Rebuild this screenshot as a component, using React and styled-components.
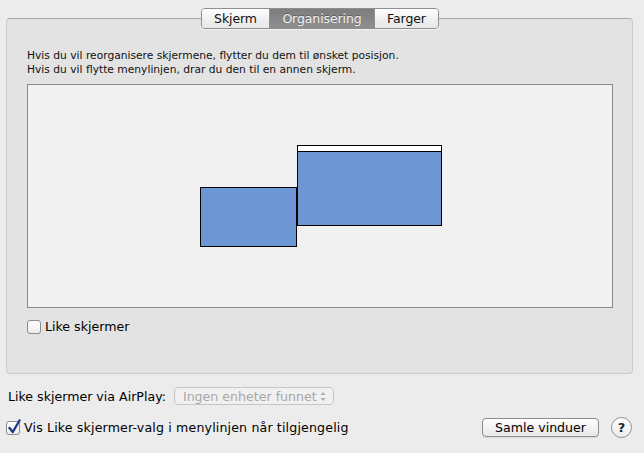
import styled, { createGlobalStyle } from "styled-components";

const Global = createGlobalStyle`
  html, body {
    margin: 0;
    padding: 0;
    background: #ececec;
  }
  body {
    font-family: "DejaVu Sans", "Liberation Sans", sans-serif;
    color: #000;
  }
`;

const Window = styled.div`
  width: 644px;
  height: 453px;
  box-sizing: border-box;
  padding: 8px 11px 0 6px;
  display: flex;
  flex-direction: column;
`;

const Tabs = styled.div`
  display: flex;
  align-self: center;
  margin-left: 1px;
  height: 21px;
  box-sizing: border-box;
  border: 1px solid #8e8e8e;
  border-radius: 4px;
  overflow: hidden;
  position: relative;
  z-index: 2;
  box-shadow: 0 1px 0 rgba(255, 255, 255, 0.5);
`;

const Tab = styled.div`
  width: ${({ w }) => w}px;
  box-sizing: border-box;
  display: flex;
  align-items: center;
  justify-content: center;
  font-size: 12.5px;
  letter-spacing: -0.1px;
  border-left: ${({ first }) => (first ? "none" : "1px solid #8e8e8e")};
  background: ${({ active }) =>
    active
      ? "linear-gradient(#7d7d7d, #8f8f8f)"
      : "linear-gradient(#ffffff, #f0f0f0 50%, #e8e8e8)"};
  color: ${({ active }) => (active ? "#f2f2f2" : "#111")};
  text-shadow: ${({ active }) => (active ? "0 -1px 0 rgba(0,0,0,0.3)" : "none")};
`;

const Group = styled.div`
  margin-top: -11px;
  height: 356px;
  box-sizing: border-box;
  background: #e3e3e3;
  border: 1px solid #cbcbcb;
  border-top-color: #a9a9a9;
  border-radius: 4px;
  padding: 30px 19px 0 20px;
  display: flex;
  flex-direction: column;
`;

const Hint = styled.div`
  font-size: 10.7px;
  line-height: 14px;
  color: #111;
`;

const Canvas = styled.div`
  margin-top: 7px;
  height: 222px;
  background: #f1f1f1;
  border: 1px solid #8a8a8a;
  position: relative;
`;

const Monitor = styled.div`
  position: absolute;
  box-sizing: border-box;
  background: #6c97d4;
  border: 1.5px solid #000;
  ${({ menubar }) =>
    menubar &&
    `
      border-top: 7px solid #000;
    `}
`;

const MenuBar = styled.div`
  position: absolute;
  left: 0;
  right: 0;
  top: -6px;
  height: 4.5px;
  background: #fff;
`;

const CheckRow = styled.label`
  display: flex;
  align-items: center;
  gap: 4px;
  font-size: 12.6px;
  letter-spacing: ${({ ls }) => ls || 0}px;
  margin-top: ${({ mt }) => mt}px;
`;

const Box = styled.span`
  width: 14px;
  height: 14px;
  box-sizing: border-box;
  border: 1px solid #8c8c8c;
  border-radius: 3px;
  background: linear-gradient(#ffffff, #ededed);
  position: relative;
  flex: none;
`;

const Check = styled.svg`
  position: absolute;
  left: 0px;
  top: -3px;
`;

const AirRow = styled.div`
  display: flex;
  align-items: center;
  gap: 8px;
  margin-top: 13px;
  margin-left: 2px;
  font-size: 12.6px;
`;

const Select = styled.div`
  width: 160px;
  height: 18px;
  box-sizing: border-box;
  border: 1px solid #c6c6c6;
  border-radius: 4px;
  background: #f0f0f0;
  color: #a8a8a8;
  font-size: 12.6px;
  display: flex;
  align-items: center;
  justify-content: space-between;
  padding: 0 7px 0 8px;
`;

const BottomRow = styled.div`
  display: flex;
  align-items: center;
  margin-top: 12px;
`;

const Button = styled.div`
  margin-left: auto;
  width: 117px;
  height: 19px;
  box-sizing: border-box;
  border: 1px solid #8e8e8e;
  border-radius: 4px;
  background: linear-gradient(#ffffff, #f2f2f2 50%, #e9e9e9);
  font-size: 12.6px;
  display: flex;
  align-items: center;
  justify-content: center;
  box-shadow: 0 1px 1px rgba(0, 0, 0, 0.08);
`;

const Help = styled.div`
  margin-left: 12px;
  margin-right: 1px;
  width: 21px;
  height: 21px;
  box-sizing: border-box;
  border: 1px solid #8e8e8e;
  border-radius: 50%;
  background: linear-gradient(#ffffff, #ececec);
  font-size: 13px;
  font-weight: bold;
  display: flex;
  align-items: center;
  justify-content: center;
  color: #222;
`;

export default function App() {
  return (
    <>
      <Global />
      <Window>
        <Tabs>
          <Tab first w={67}>Skjerm</Tab>
          <Tab active w={105}>Organisering</Tab>
          <Tab w={64}>Farger</Tab>
        </Tabs>
        <Group>
          <Hint>
            Hvis du vil reorganisere skjermene, flytter du dem til ønsket posisjon.
            <br />
            Hvis du vil flytte menylinjen, drar du den til en annen skjerm.
          </Hint>
          <Canvas>
            <Monitor style={{ left: 172, top: 102, width: 97, height: 60 }} />
            <Monitor menubar style={{ left: 269, top: 60, width: 145, height: 81 }}>
              <MenuBar />
            </Monitor>
          </Canvas>
          <CheckRow mt={11}>
            <Box />
            Like skjermer
          </CheckRow>
        </Group>
        <AirRow>
          Like skjermer via AirPlay:
          <Select>
            <span>Ingen enheter funnet</span>
            <svg width="6" height="11" viewBox="0 0 6 11">
              <path d="M0.5 4 L3 1 L5.5 4 Z" fill="#b0b0b0" />
              <path d="M0.5 7 L3 10 L5.5 7 Z" fill="#b0b0b0" />
            </svg>
          </Select>
        </AirRow>
        <BottomRow>
          <CheckRow mt={0} ls={0.15}>
            <Box>
              <Check width="15" height="16" viewBox="0 0 15 16">
                <path
                  d="M2.5 9 L5.8 13 L12.5 1.5"
                  fill="none"
                  stroke="#1f3a8a"
                  strokeWidth="2.4"
                  strokeLinecap="round"
                  strokeLinejoin="round"
                />
              </Check>
            </Box>
            Vis Like skjermer-valg i menylinjen når tilgjengelig
          </CheckRow>
          <Button>Samle vinduer</Button>
          <Help>?</Help>
        </BottomRow>
      </Window>
    </>
  );
}
